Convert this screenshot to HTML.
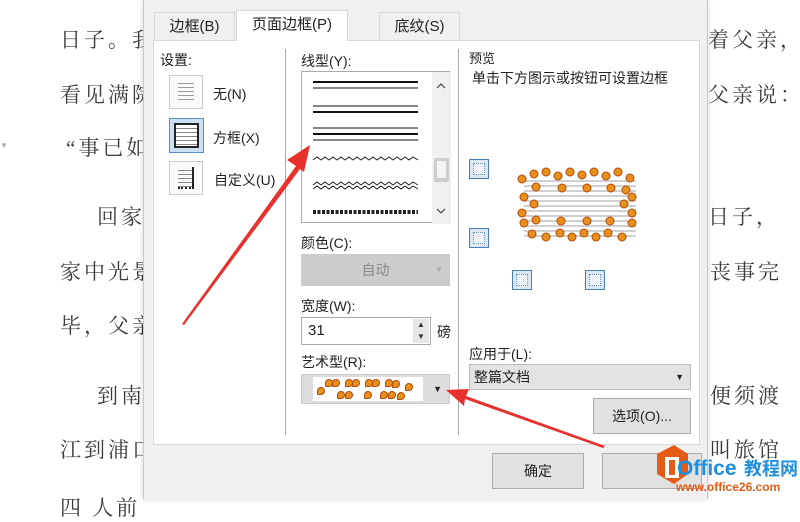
<!DOCTYPE html>
<html><head><meta charset="utf-8"><style>
*{margin:0;padding:0;box-sizing:border-box}
body{width:800px;height:499px;overflow:hidden;background:#fff;position:relative;font-family:"Liberation Sans","Noto Sans CJK SC",sans-serif;color:#222}
.t{position:absolute;font-size:21px;color:#3a3a3a;letter-spacing:3px;white-space:nowrap;font-family:"Liberation Serif","Noto Serif CJK SC",serif}
.dlg{position:absolute;left:143px;top:0;width:565px;height:499px;background:#f0f0f0;border-left:1px solid #c8c8c8;border-right:1px solid #c8c8c8;box-shadow:0 0 6px rgba(0,0,0,.15)}
.a{position:absolute;font-size:14px;white-space:nowrap}
.tab{position:absolute;top:12px;height:29px;font-size:15px;text-align:center;line-height:28px;border:1px solid #d9d9d9;border-bottom:none;background:#f0f0f0}
.panel{position:absolute;left:9px;top:40px;width:547px;height:405px;background:#fff;border:1px solid #d9d9d9}
.btn{position:absolute;background:#e1e1e1;border:1px solid #adadad;font-size:14px;text-align:center}
.mini{position:absolute;width:20px;height:20px;border:1px solid #4a7fb0;background:#dbe8f4;}
.mini:after{content:"";position:absolute;left:3px;top:3px;right:3px;bottom:3px;border:1px dotted #6a8fb5;background:#eef4fa}
.c{position:absolute;width:8px;height:8px;border-radius:50% 50% 50% 10%;background:#e8901a;border:1px solid #b34a10}
</style></head><body>
<div class="t" style="left:60px;top:24px">日子。我</div>
<div class="t" style="left:60px;top:79px">看见满院</div>
<div class="t" style="left:66px;top:132px">“事已如</div>
<div class="t" style="left:97px;top:201px">回家</div>
<div class="t" style="left:60px;top:256px">家中光景</div>
<div class="t" style="left:60px;top:310px">毕，父亲</div>
<div class="t" style="left:97px;top:380px">到南</div>
<div class="t" style="left:60px;top:434px">江到浦口</div>
<div class="t" style="left:60px;top:492px">四 人前</div>
<div class="t" style="left:708px;top:24px">着父亲，</div>
<div class="t" style="left:708px;top:79px">父亲说：</div>
<div class="t" style="left:708px;top:201px">日子，</div>
<div class="t" style="left:710px;top:256px">丧事完</div>
<div class="t" style="left:710px;top:380px">便须渡</div>
<div class="t" style="left:710px;top:434px">叫旅馆</div>
<div style="position:absolute;left:0;top:141px;color:#aaa;font-size:8px">▼</div>

<div class="dlg">
 <div class="tab" style="left:10px;width:81px">边框(B)</div>
 <div class="tab" style="left:235px;width:81px">底纹(S)</div>
 <div class="panel">
  <div class="a" style="left:6px;top:9px">设置:</div>
  <div style="position:absolute;left:15px;top:34px;width:34px;height:34px;border:1px solid #ccc;background:#fafafa"><div style="margin:7px 8px;height:18px;background:repeating-linear-gradient(#999 0 1px,transparent 1px 4px)"></div></div>
  <div class="a" style="left:59px;top:43px">无(N)</div>
  <div style="position:absolute;left:15px;top:77px;width:35px;height:35px;border:1px solid #5b8ec0;background:#cde0f3"><div style="margin:4px;height:25px;border:2px solid #222;background:#fff repeating-linear-gradient(transparent 0 3px,#888 3px 4px)"></div></div>
  <div class="a" style="left:59px;top:87px">方框(X)</div>
  <div style="position:absolute;left:15px;top:120px;width:34px;height:34px;border:1px solid #ccc;background:#fafafa"><div style="margin:5px 8px;height:22px;border-right:2px solid #222;border-bottom:2px dotted #222;background:repeating-linear-gradient(transparent 0 3px,#888 3px 4px)"></div></div>
  <div class="a" style="left:60px;top:129px">自定义(U)</div>
  <div style="position:absolute;left:131px;top:8px;width:1px;height:386px;background:#aaa"></div>
  <div style="position:absolute;left:304px;top:8px;width:1px;height:386px;background:#aaa"></div>

  <div class="a" style="left:147px;top:10px">线型(Y):</div>
  <div style="position:absolute;left:147px;top:30px;width:149px;height:152px;border:1px solid #aaa;background:#fff">
   <svg width="149" height="152" style="position:absolute;left:0;top:0">
    <g stroke="#111"><line x1="11" y1="10" x2="116" y2="10" stroke-width="2"/><line x1="11" y1="16" x2="116" y2="16"/>
    <line x1="11" y1="34" x2="116" y2="34"/><line x1="11" y1="40" x2="116" y2="40" stroke-width="2"/>
    <line x1="11" y1="56" x2="116" y2="56"/><line x1="11" y1="62" x2="116" y2="62" stroke-width="2"/><line x1="11" y1="68" x2="116" y2="68"/></g>
    <polyline fill="none" stroke="#222" points="11,88 15,85 19,88 23,85 27,88 31,85 35,88 39,85 43,88 47,85 51,88 55,85 59,88 63,85 67,88 71,85 75,88 79,85 83,88 87,85 91,88 95,85 99,88 103,85 107,88 111,85 116,88"/>
    <polyline fill="none" stroke="#222" points="11,113 15,110 19,113 23,110 27,113 31,110 35,113 39,110 43,113 47,110 51,113 55,110 59,113 63,110 67,113 71,110 75,113 79,110 83,113 87,110 91,113 95,110 99,113 103,110 107,113 111,110 116,113"/>
    <polyline fill="none" stroke="#222" points="11,117 15,114 19,117 23,114 27,117 31,114 35,117 39,114 43,117 47,114 51,117 55,114 59,117 63,114 67,117 71,114 75,117 79,114 83,117 87,114 91,117 95,114 99,117 103,114 107,117 111,114 116,117"/>
    <line x1="11" y1="140" x2="116" y2="140" stroke="#222" stroke-width="4" stroke-dasharray="3 1.5"/>
    <rect x="130" y="0" width="19" height="152" fill="#f0f0f0"/>
    <rect x="132" y="86" width="15" height="24" fill="#cdcdcd"/><rect x="135" y="89" width="9" height="17" fill="#f4f4f4"/>
    <polyline points="135,16 139,12 143,16" fill="none" stroke="#555" stroke-width="1.3"/>
    <polyline points="135,137 139,141 143,137" fill="none" stroke="#555" stroke-width="1.3"/>
   </svg>
  </div>
  <div class="a" style="left:147px;top:192px">颜色(C):</div>
  <div style="position:absolute;left:147px;top:213px;width:149px;height:32px;background:#ccc;color:#888;font-size:14px;text-align:center;line-height:32px">自动<span style="position:absolute;right:7px;font-size:8px;color:#aaa">▼</span></div>
  <div class="a" style="left:147px;top:255px">宽度(W):</div>
  <div style="position:absolute;left:147px;top:276px;width:130px;height:28px;border:1px solid #aaa;background:#fff;font-size:15px;line-height:26px;padding-left:6px">31
   <div style="position:absolute;right:1px;top:1px;width:16px;height:24px;background:#e6e6e6;font-size:8px;line-height:12px;text-align:center;color:#333">▲<br>▼</div></div>
  <div class="a" style="left:283px;top:281px">磅</div>
  <div class="a" style="left:147px;top:311px">艺术型(R):</div>
  <div style="position:absolute;left:147px;top:333px;width:149px;height:30px;background:#ddd;border:1px solid #ccc">
   <div style="position:absolute;left:11px;top:2px;width:110px;height:24px;background:#fff"></div>
   <div class="c" style="left:23px;top:4px"></div><div class="c" style="left:30px;top:4px"></div><div class="c" style="left:43px;top:4px"></div><div class="c" style="left:50px;top:4px"></div><div class="c" style="left:63px;top:4px"></div><div class="c" style="left:70px;top:4px"></div><div class="c" style="left:83px;top:4px"></div><div class="c" style="left:90px;top:5px"></div><div class="c" style="left:103px;top:8px"></div>
   <div class="c" style="left:15px;top:12px"></div><div class="c" style="left:35px;top:16px"></div><div class="c" style="left:43px;top:16px"></div><div class="c" style="left:62px;top:16px"></div><div class="c" style="left:78px;top:16px"></div><div class="c" style="left:86px;top:16px"></div><div class="c" style="left:95px;top:17px"></div>
   <span style="position:absolute;right:7px;top:9px;font-size:9px">▼</span></div>

  <div class="a" style="left:315px;top:7px;font-size:13px">预览</div>
  <div class="a" style="left:318px;top:27px">单击下方图示或按钮可设置边框</div>
  <div class="mini" style="left:315px;top:118px"></div>
  <div class="mini" style="left:315px;top:187px"></div>
  <div class="mini" style="left:358px;top:229px"></div>
  <div class="mini" style="left:431px;top:229px"></div>
  <div style="position:absolute;left:370px;top:136px;width:112px;height:60px;background:repeating-linear-gradient(#fff 0 3px,#d0d0d0 3px 5px)"></div>
  <svg style="position:absolute;left:360px;top:126px" width="130" height="80">
   <g fill="#e8901a" stroke="#b34a10" stroke-width="1">
    <circle cx="8" cy="12" r="4"/><circle cx="20" cy="7" r="4"/><circle cx="32" cy="5" r="4"/><circle cx="44" cy="9" r="4"/><circle cx="56" cy="5" r="4"/><circle cx="68" cy="8" r="4"/><circle cx="80" cy="5" r="4"/><circle cx="92" cy="9" r="4"/><circle cx="104" cy="5" r="4"/><circle cx="116" cy="11" r="4"/>
    <circle cx="22" cy="20" r="4"/><circle cx="48" cy="21" r="4"/><circle cx="73" cy="21" r="4"/><circle cx="97" cy="21" r="4"/><circle cx="112" cy="23" r="4"/>
    <circle cx="10" cy="30" r="4"/><circle cx="20" cy="37" r="4"/><circle cx="110" cy="37" r="4"/><circle cx="118" cy="30" r="4"/>
    <circle cx="8" cy="46" r="4"/><circle cx="118" cy="46" r="4"/>
    <circle cx="10" cy="56" r="4"/><circle cx="22" cy="53" r="4"/><circle cx="47" cy="54" r="4"/><circle cx="73" cy="54" r="4"/><circle cx="96" cy="54" r="4"/><circle cx="118" cy="56" r="4"/>
    <circle cx="18" cy="67" r="4"/><circle cx="32" cy="70" r="4"/><circle cx="46" cy="66" r="4"/><circle cx="58" cy="70" r="4"/><circle cx="70" cy="66" r="4"/><circle cx="82" cy="70" r="4"/><circle cx="94" cy="66" r="4"/><circle cx="108" cy="70" r="4"/>
   </g></svg>
  <div class="a" style="left:315px;top:303px">应用于(L):</div>
  <div style="position:absolute;left:315px;top:323px;width:222px;height:26px;background:#e3e3e3;border:1px solid #bbb;font-size:14px;line-height:24px;padding-left:4px">整篇文档<span style="position:absolute;right:6px;font-size:9px">▼</span></div>
  <div class="btn" style="left:439px;top:357px;width:98px;height:36px;line-height:34px">选项(O)...</div>
 </div>
 <div class="tab" style="left:92px;width:112px;top:10px;height:31px;background:#fff;z-index:2">页面边框(P)</div>
 <div class="btn" style="left:348px;top:453px;width:92px;height:36px;line-height:34px">确定</div>
 <div class="btn" style="left:458px;top:453px;width:100px;height:36px;line-height:34px"></div>
</div>

<svg style="position:absolute;left:0;top:0" width="800" height="499">
 <polygon points="182,324 296,166 287,160 310,145 304,172 300,169 184,325" fill="#e8302c"/>
 <polygon points="605,446 466,396 469,389 446,390 464,406 465,399 603,448" fill="#e8302c"/>
 <polygon points="657,454 674,445 688,454 688,474 674,484 657,474" fill="#e55a14"/>
 <rect x="665" y="457" width="14" height="21" fill="#fff"/><rect x="669" y="460" width="6" height="15" fill="#e55a14"/>
 <text x="677" y="475" font-family="Liberation Sans,sans-serif" font-weight="bold" font-size="21" fill="#1e8fe0">Office</text>
 <text x="744" y="475" font-family="Noto Sans CJK SC,sans-serif" font-weight="bold" font-size="18" fill="#1e8fe0">教程网</text>
 <text x="676" y="491" font-family="Liberation Sans,sans-serif" font-weight="bold" font-size="12" fill="#e55a14">www.office26.com</text>
</svg>
</body></html>
